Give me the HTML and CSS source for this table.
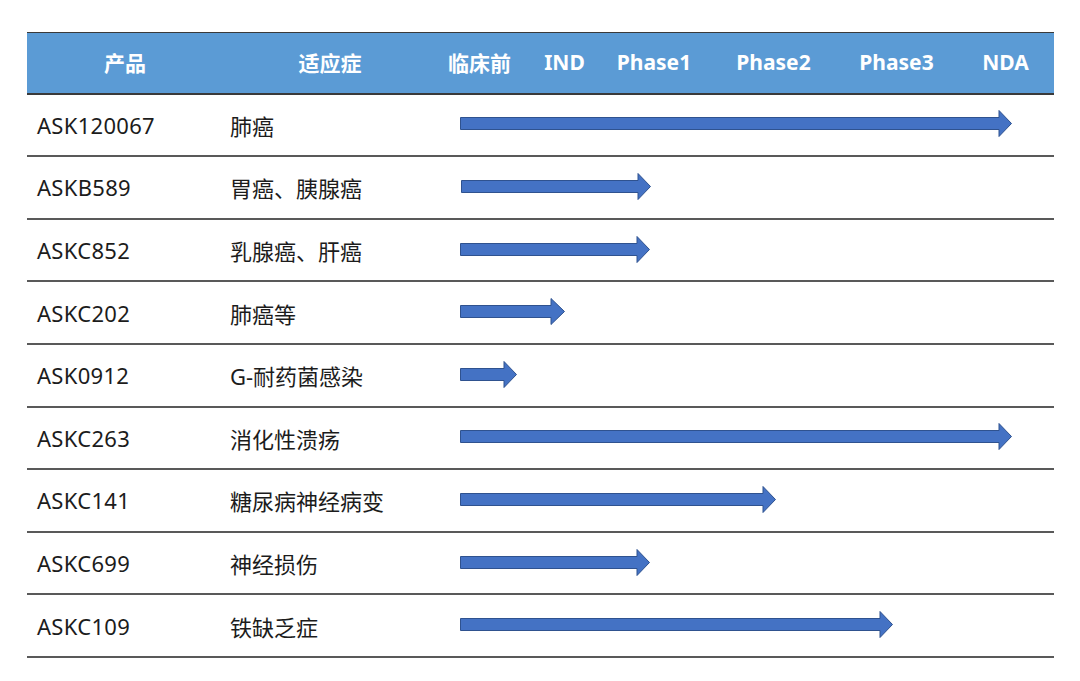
FILE: index.html
```html
<!DOCTYPE html>
<html lang="zh">
<head>
<meta charset="utf-8">
<title>产品管线</title>
<link rel="stylesheet" href="styles.css">
</head>
<body>
<div class="pipeline">
  <div class="head">
    <div class="hcell">产品</div>
    <div class="hcell">适应症</div>
    <div class="stages">
      <div class="stage">临床前</div>
      <div class="stage">IND</div>
      <div class="stage">Phase1</div>
      <div class="stage">Phase2</div>
      <div class="stage">Phase3</div>
      <div class="stage last">NDA</div>
    </div>
  </div>

  <div class="row">
    <div class="prod">ASK120067</div>
    <div class="ind">肺癌</div>
    <div class="track"><svg class="arrow" width="552" height="27" viewBox="0 0 552 27"><path d="M0.5 7.5 H539 V0.5 L551.5 13.5 L539 26.5 V19.5 H0.5 Z"/></svg></div>
  </div>
  <div class="row">
    <div class="prod">ASKB589</div>
    <div class="ind">胃癌、胰腺癌</div>
    <div class="track"><svg class="arrow" width="191" height="27" viewBox="0 0 191 27"><path d="M1.5 7.5 H178 V0.5 L190.5 13.5 L178 26.5 V19.5 H1.5 Z"/></svg></div>
  </div>
  <div class="row">
    <div class="prod">ASKC852</div>
    <div class="ind">乳腺癌、肝癌</div>
    <div class="track"><svg class="arrow" width="190" height="27" viewBox="0 0 190 27"><path d="M0.5 7.5 H177 V0.5 L189.5 13.5 L177 26.5 V19.5 H0.5 Z"/></svg></div>
  </div>
  <div class="row">
    <div class="prod">ASKC202</div>
    <div class="ind">肺癌等</div>
    <div class="track"><svg class="arrow" width="105" height="27" viewBox="0 0 105 27"><path d="M0.5 7.5 H91 V0.5 L104.5 13.5 L91 26.5 V19.5 H0.5 Z"/></svg></div>
  </div>
  <div class="row">
    <div class="prod">ASK0912</div>
    <div class="ind">G-耐药菌感染</div>
    <div class="track"><svg class="arrow" width="57" height="27" viewBox="0 0 57 27"><path d="M0.5 7.5 H44 V0.5 L56.5 13.5 L44 26.5 V19.5 H0.5 Z"/></svg></div>
  </div>
  <div class="row">
    <div class="prod">ASKC263</div>
    <div class="ind">消化性溃疡</div>
    <div class="track"><svg class="arrow" width="552" height="27" viewBox="0 0 552 27"><path d="M0.5 7.5 H539 V0.5 L551.5 13.5 L539 26.5 V19.5 H0.5 Z"/></svg></div>
  </div>
  <div class="row">
    <div class="prod">ASKC141</div>
    <div class="ind">糖尿病神经病变</div>
    <div class="track"><svg class="arrow" width="316" height="27" viewBox="0 0 316 27"><path d="M0.5 7.5 H303 V0.5 L315.5 13.5 L303 26.5 V19.5 H0.5 Z"/></svg></div>
  </div>
  <div class="row">
    <div class="prod">ASKC699</div>
    <div class="ind">神经损伤</div>
    <div class="track"><svg class="arrow" width="190" height="27" viewBox="0 0 190 27"><path d="M0.5 7.5 H177 V0.5 L189.5 13.5 L177 26.5 V19.5 H0.5 Z"/></svg></div>
  </div>
  <div class="row">
    <div class="prod">ASKC109</div>
    <div class="ind">铁缺乏症</div>
    <div class="track"><svg class="arrow" width="433" height="27" viewBox="0 0 433 27"><path d="M0.5 7.5 H420 V0.5 L432.5 13.5 L420 26.5 V19.5 H0.5 Z"/></svg></div>
  </div>
</div>
</body>
</html>
```

FILE: styles.css
```css
html, body {
  margin: 0;
  padding: 0;
  background: #ffffff;
}

body {
  font-family: "Noto Sans", "Noto Sans CJK SC", sans-serif;
  color: #1c1c1c;
}

.pipeline {
  margin: 32px 0 0 27px;
  width: 1027px;
}

.head {
  display: grid;
  grid-template-columns: 196px 214px 617px;
  height: 62.6px;
  box-sizing: border-box;
  background: #5b9bd5;
  border-top: 1px solid #3a3a3a;
  border-bottom: 2px solid #3a3a3a;
  color: #ffffff;
  font-weight: 700;
  font-size: 21px;
}

.hcell {
  display: flex;
  align-items: center;
  justify-content: center;
  padding-bottom: 1px;
}

.stages {
  display: grid;
  grid-template-columns: 85px 85px 94px 145px 101px 107px;
  align-items: center;
  padding-bottom: 1px;
}

.stage {
  text-align: center;
  white-space: nowrap;
}

.stage.last {
  padding-left: 10px;
}

.row {
  display: grid;
  grid-template-columns: 196px 214px 617px;
  height: 62.6px;
  box-sizing: border-box;
  border-bottom: 2px solid #595959;
  align-items: center;
  font-size: 22px;
}

.prod {
  padding-left: 10px;
  letter-spacing: 0.3px;
}

.ind {
  padding-left: 7px;
}

.track {
  display: flex;
  align-items: center;
  padding-left: 23px;
  padding-bottom: 2px;
}

.arrow {
  display: block;
}

.arrow path {
  fill: #4472c4;
  stroke: #2f528f;
  stroke-width: 1;
}
```
